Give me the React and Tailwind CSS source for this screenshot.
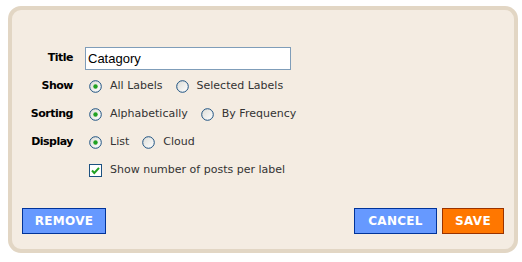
import React, { useState } from 'react';

const FONT = { fontFamily: '"DejaVu Sans", Verdana, sans-serif' };

function Radio({ checked }) {
  return (
    <svg width="13" height="13" viewBox="0 0 13 13" className="shrink-0">
      <defs>
        <linearGradient id="rg" x1="0" y1="0" x2="1" y2="1">
          <stop offset="0" stopColor="#dcdcd6" />
          <stop offset="1" stopColor="#ffffff" />
        </linearGradient>
      </defs>
      <circle cx="6.5" cy="6.5" r="5.8" fill="url(#rg)" stroke="#1c5180" strokeWidth="1" />
      {checked && <circle cx="6.5" cy="6.5" r="2.2" fill="#21a121" />}
    </svg>
  );
}

function Option({ label, checked, onClick }) {
  return (
    <button type="button" onClick={onClick} className="flex items-center gap-[8px] mr-[13px] text-[11px] text-[#333]">
      <Radio checked={checked} />
      <span>{label}</span>
    </button>
  );
}

function Row({ label, children }) {
  return (
    <div className="flex items-center h-[28px]">
      <div className="w-[51px] text-right text-[11px] font-bold text-black tracking-[-0.5px]">{label}</div>
      <div className="flex items-center ml-[16px]">{children}</div>
    </div>
  );
}

export default function App() {
  const [show, setShow] = useState('all');
  const [sort, setSort] = useState('alpha');
  const [display, setDisplay] = useState('list');
  const [count, setCount] = useState(true);

  return (
    <div className="w-[522px] h-[262px] bg-white pt-[6px] pl-[8px]" style={FONT}>
      <div className="w-[510px] h-[247px] rounded-[13px] border-[4px] border-[#e2d6c4] bg-[#f4ece2] flex flex-col pt-[34px] px-[10px] pb-[15px]">
        <div className="flex items-center h-[28px]">
          <div className="w-[51px] text-right text-[11px] font-bold text-black tracking-[-0.5px]">Title</div>
          <input
            defaultValue="Catagory"
            className="ml-[12px] w-[206px] h-[23px] border border-[#7f9db9] bg-white px-[2px] text-[13px] text-black outline-none"
            style={{ fontFamily: '"Liberation Sans", Arial, sans-serif' }}
          />
        </div>
        <Row label="Show">
          <Option label="All Labels" checked={show === 'all'} onClick={() => setShow('all')} />
          <Option label="Selected Labels" checked={show === 'sel'} onClick={() => setShow('sel')} />
        </Row>
        <Row label="Sorting">
          <Option label="Alphabetically" checked={sort === 'alpha'} onClick={() => setSort('alpha')} />
          <Option label="By Frequency" checked={sort === 'freq'} onClick={() => setSort('freq')} />
        </Row>
        <Row label="Display">
          <Option label="List" checked={display === 'list'} onClick={() => setDisplay('list')} />
          <Option label="Cloud" checked={display === 'cloud'} onClick={() => setDisplay('cloud')} />
        </Row>
        <Row label="">
          <button type="button" onClick={() => setCount(!count)} className="flex items-center gap-[8px] text-[11px] text-[#333]">
            <svg width="13" height="13" viewBox="0 0 13 13" className="shrink-0">
              <rect x="0.5" y="0.5" width="12" height="12" fill="#fff" stroke="#1c5180" />
              {count && <path d="M3 6.5 L5.3 9 L10 3.8" fill="none" stroke="#21a121" strokeWidth="2" />}
            </svg>
            <span>Show number of posts per label</span>
          </button>
        </Row>
        <div className="flex justify-between mt-auto">
          <button className="w-[84px] h-[26px] bg-[#6699ff] border border-[#003399] text-white text-[12px] font-bold tracking-[0.3px]">REMOVE</button>
          <div className="flex gap-[5px]">
            <button className="w-[83px] h-[26px] bg-[#6699ff] border border-[#003399] text-white text-[12px] font-bold tracking-[0.3px]">CANCEL</button>
            <button className="w-[62px] h-[26px] bg-[#ff7700] border border-[#993300] text-white text-[12px] font-bold tracking-[0.3px]">SAVE</button>
          </div>
        </div>
      </div>
    </div>
  );
}
